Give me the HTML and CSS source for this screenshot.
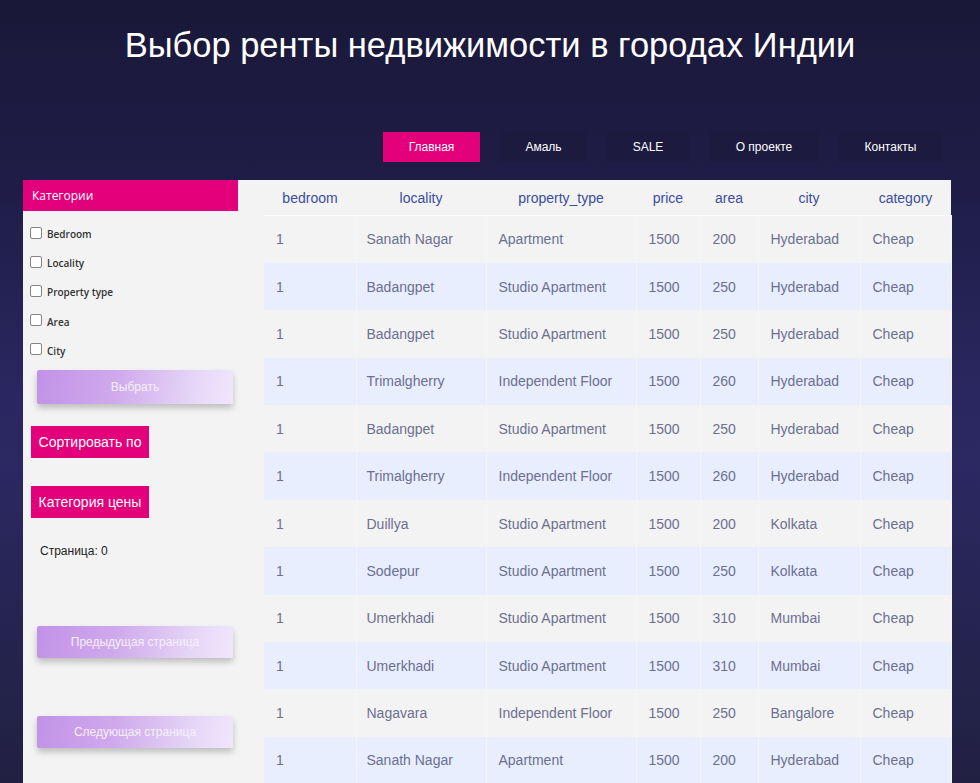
FILE: index.html
```html
<!DOCTYPE html>
<html lang="ru">
<head>
<meta charset="utf-8">
<title>Выбор ренты недвижимости в городах Индии</title>
<link rel="stylesheet" href="styles.css">
</head>
<body>
<header class="top">
  <h1 class="title">Выбор ренты недвижимости в городах Индии</h1>
  <nav class="nav">
    <a class="nav-btn nav-active w97">Главная</a>
    <a class="nav-btn w87">Амаль</a>
    <a class="nav-btn w82">SALE</a>
    <a class="nav-btn w110">О проекте</a>
    <a class="nav-btn w103">Контакты</a>
  </nav>
</header>
<main class="panel">
  <aside class="sidebar">
    <div class="side-head">Категории</div>
    <div class="checks">
      <label class="check"><input type="checkbox"><span>Bedroom</span></label>
      <label class="check"><input type="checkbox"><span>Locality</span></label>
      <label class="check"><input type="checkbox"><span>Property type</span></label>
      <label class="check"><input type="checkbox"><span>Area</span></label>
      <label class="check"><input type="checkbox"><span>City</span></label>
    </div>
    <button class="soft-btn select-btn">Выбрать</button>
    <button class="pink-btn sort-btn">Сортировать по</button>
    <button class="pink-btn price-btn">Категория цены</button>
    <div class="page-num">Страница: 0</div>
    <button class="soft-btn prev-btn">Предыдущая страница</button>
    <button class="soft-btn next-btn">Следующая страница</button>
  </aside>
  <section class="table-wrap">
    <table class="data">
      <colgroup>
        <col class="c1"><col class="c2"><col class="c3"><col class="c4"><col class="c5"><col class="c6"><col class="c7">
      </colgroup>
      <thead>
        <tr><th>bedroom</th><th>locality</th><th>property_type</th><th>price</th><th>area</th><th>city</th><th>category</th></tr>
      </thead>
      <tbody>
        <tr><td>1</td><td>Sanath Nagar</td><td>Apartment</td><td>1500</td><td>200</td><td>Hyderabad</td><td>Cheap</td></tr>
        <tr><td>1</td><td>Badangpet</td><td>Studio Apartment</td><td>1500</td><td>250</td><td>Hyderabad</td><td>Cheap</td></tr>
        <tr><td>1</td><td>Badangpet</td><td>Studio Apartment</td><td>1500</td><td>250</td><td>Hyderabad</td><td>Cheap</td></tr>
        <tr><td>1</td><td>Trimalgherry</td><td>Independent Floor</td><td>1500</td><td>260</td><td>Hyderabad</td><td>Cheap</td></tr>
        <tr><td>1</td><td>Badangpet</td><td>Studio Apartment</td><td>1500</td><td>250</td><td>Hyderabad</td><td>Cheap</td></tr>
        <tr><td>1</td><td>Trimalgherry</td><td>Independent Floor</td><td>1500</td><td>260</td><td>Hyderabad</td><td>Cheap</td></tr>
        <tr><td>1</td><td>Duillya</td><td>Studio Apartment</td><td>1500</td><td>200</td><td>Kolkata</td><td>Cheap</td></tr>
        <tr><td>1</td><td>Sodepur</td><td>Studio Apartment</td><td>1500</td><td>250</td><td>Kolkata</td><td>Cheap</td></tr>
        <tr><td>1</td><td>Umerkhadi</td><td>Studio Apartment</td><td>1500</td><td>310</td><td>Mumbai</td><td>Cheap</td></tr>
        <tr><td>1</td><td>Umerkhadi</td><td>Studio Apartment</td><td>1500</td><td>310</td><td>Mumbai</td><td>Cheap</td></tr>
        <tr><td>1</td><td>Nagavara</td><td>Independent Floor</td><td>1500</td><td>250</td><td>Bangalore</td><td>Cheap</td></tr>
        <tr><td>1</td><td>Sanath Nagar</td><td>Apartment</td><td>1500</td><td>200</td><td>Hyderabad</td><td>Cheap</td></tr>
      </tbody>
    </table>
  </section>
</main>
</body>
</html>
```
FILE: styles.css
```css
html, body {
  margin: 0;
  padding: 0;
}
body {
  height: 783px;
  overflow: hidden;
  font-family: "Liberation Sans", Arial, sans-serif;
  background: linear-gradient(180deg, #1a1838 0%, #1f1d48 25%, #2a2760 50%, #2b2862 60%, #24234c 85%, #212042 100%);
}
.top {
  display: flex;
  flex-direction: column;
}
.title {
  margin: 0;
  padding-top: 25px;
  height: 40px;
  line-height: 40px;
  text-align: center;
  font-size: 34.5px;
  font-weight: normal;
  color: #ffffff;
}
.nav {
  display: flex;
  justify-content: flex-end;
  gap: 20px;
  margin-top: 67px;
  padding-right: 38px;
}
.nav-btn {
  height: 30px;
  line-height: 30px;
  text-align: center;
  font-size: 12px;
  color: #ffffff;
  background: #1c1a3e;
}
.nav-active {
  background: #e2007b;
}
.w97 { width: 97px; }
.w87 { width: 87px; }
.w82 { width: 82px; }
.w110 { width: 110px; }
.w103 { width: 103px; }
.panel {
  display: flex;
  gap: 26px;
  margin: 18px 0 0 23px;
  width: 928px;
  background: #f3f3f3;
  min-height: 620px;
}
.sidebar {
  width: 215px;
  flex: none;
  display: flex;
  flex-direction: column;
  align-items: flex-start;
}
.side-head {
  width: 206px;
  height: 31px;
  line-height: 31px;
  padding-left: 9px;
  background: #e2007b;
  color: #ffffff;
  font-size: 12px;
  font-family: "Open Sans", "Liberation Sans", sans-serif;
}
.checks {
  display: flex;
  flex-direction: column;
  padding-top: 7px;
}
.check {
  display: flex;
  align-items: center;
  height: 29.2px;
  font-family: "Open Sans", "Liberation Sans", sans-serif;
  font-size: 10px;
  font-weight: 600;
  color: #333333;
}
.check input {
  appearance: none;
  -webkit-appearance: none;
  box-sizing: border-box;
  margin: 0 0 0 7px;
  width: 12px;
  height: 12px;
  border: 1px solid #858585;
  border-radius: 2px;
  background: #ffffff;
}
.check span {
  margin-left: 5px;
  padding-top: 3px;
}
.soft-btn {
  width: 196px;
  margin-left: 14px;
  border: none;
  border-radius: 2px;
  background: linear-gradient(100deg, #c292e7 0%, #cfa9ec 40%, #e6d7f7 80%, #efe7fb 100%);
  box-shadow: 0 4px 6px rgba(0, 0, 0, 0.22);
  color: #f6f0fd;
  font-family: "Liberation Sans", Arial, sans-serif;
  font-size: 12px;
  padding: 0;
}
.select-btn {
  height: 34px;
  margin-top: 6px;
}
.pink-btn {
  width: 118px;
  height: 32px;
  margin-left: 8px;
  border: none;
  background: #e2007b;
  color: #ffffff;
  font-family: "Liberation Sans", Arial, sans-serif;
  font-size: 14px;
  padding: 0;
}
.sort-btn {
  margin-top: 22px;
}
.price-btn {
  margin-top: 28px;
}
.page-num {
  margin: 26px 0 0 17px;
  font-size: 12px;
  line-height: 14px;
  color: #222222;
}
.prev-btn {
  height: 32px;
  margin-top: 68px;
}
.next-btn {
  height: 32px;
  margin-top: 58px;
}
.table-wrap {
  width: 687px;
  flex: none;
}
.data {
  width: 687px;
  table-layout: fixed;
  border-collapse: collapse;
  font-size: 14px;
}
.c1 { width: 92px; }
.c2 { width: 130px; }
.c3 { width: 150px; }
.c4 { width: 64px; }
.c5 { width: 58px; }
.c6 { width: 102px; }
.c7 { width: 91px; }
.data th {
  height: 35px;
  padding: 0;
  font-weight: normal;
  color: #3a4ea2;
  text-align: center;
  border-bottom: 1px solid #fafafa;
}
.data td {
  height: 47.4px;
  box-sizing: border-box;
  padding: 0 0 0 12px;
  color: #6d6f92;
  text-align: left;
  border-right: 1px solid #f5f5f5;
}
.data td:nth-child(2) {
  padding-left: 10px;
}
.data tbody tr:nth-child(odd) {
  background: #f3f3f3;
}
.data tbody tr:nth-child(even) {
  background: #e8eefe;
}
```
